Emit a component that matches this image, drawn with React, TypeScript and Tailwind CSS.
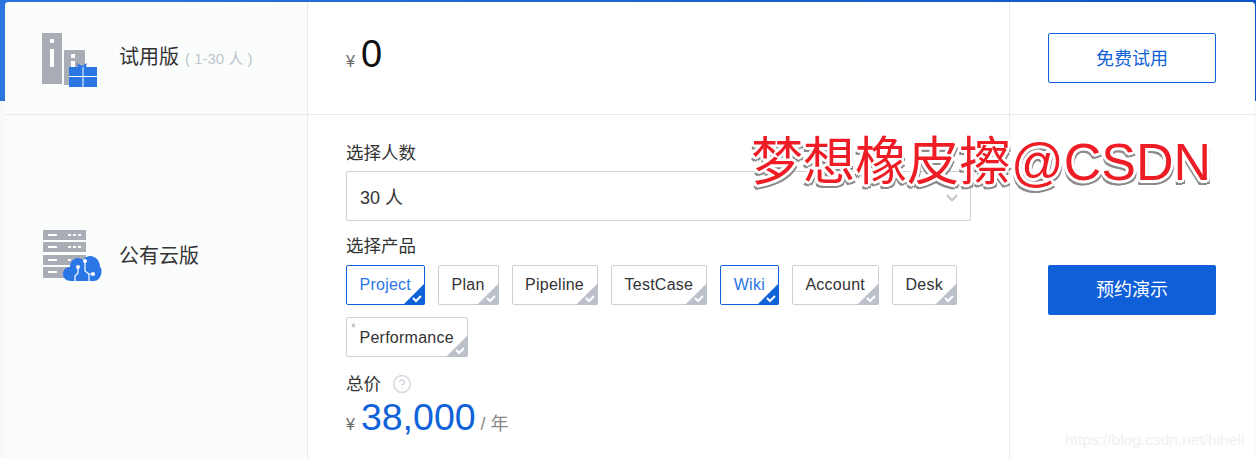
import React from "react";
import { ChevronDown, CircleHelp } from "lucide-react";

const PRODUCTS = [
  { name: "Project", active: true },
  { name: "Plan" },
  { name: "Pipeline" },
  { name: "TestCase" },
  { name: "Wiki", active: true },
  { name: "Account" },
  { name: "Desk" },
  { name: "Performance", star: true },
];

function TrialIcon() {
  return (
    <svg width="56" height="55" viewBox="0 0 56 55" className="shrink-0">
      <path fill="#a9adb6" d="M0 0h20v51H0z" />
      <path fill="#fff" d="M8 6h4v4H8zM8 16h4v18H8z" />
      <path fill="#a9adb6" d="M22 17h21v35H22z" />
      <path fill="#fff" d="M29 21h4v4h-4zM29 28h4v12h-4z" />
      <path fill="#2b76e5" d="M27 34h28v20H27z" />
      <path fill="#2b76e5" d="M35 30l5 3 5-3-1 4h-8z" />
      <path fill="#fff" d="M40.500 34h1v20h-1zM27 43h28v1H27z" />
    </svg>
  );
}

function CloudIcon() {
  return (
    <svg width="60" height="52" viewBox="0 0 60 52" className="shrink-0">
      <g fill="#a9adb6">
        <path d="M0 0h43v10H0zM0 12h43v10H0zM0 25h43v10H0zM0 37h43v11H0z" />
      </g>
      <g fill="#fff">
        <path d="M5 4h9v2H5zM25 4h3v2h-3zM30 4h3v2h-3zM35 4h3v2h-3z" />
        <path d="M5 16h9v2H5zM25 16h3v2h-3zM30 16h3v2h-3zM35 16h3v2h-3z" />
        <path d="M5 29h9v2H5zM25 29h3v2h-3zM30 29h3v2h-3z" />
        <path d="M5 41h9v2H5z" />
      </g>
      <path
        fill="#2b76e5"
        d="M28 51c-5 0-8-3-8-7 0-4 3-7 7-7 0-6 4-9 8-9 2 0 4 1 5 2 2-3 5-4 7-4 6 0 10 5 10 11 3 1 2 14-6 14z"
      />
      <g fill="none" stroke="#fff" strokeWidth="1.200">
        <path d="M35 38v5l-3 3v5M42 31v10l4 3v7M49 44h-3" />
      </g>
      <g fill="#fff">
        <circle cx="35" cy="37" r="2" />
        <circle cx="42" cy="31" r="2" />
        <circle cx="50" cy="44" r="2" />
      </g>
    </svg>
  );
}

function Chip({ name, active, star }: { name: string; active?: boolean; star?: boolean }) {
  return (
    <div
      className={`relative h-10 flex items-center pl-[12.500px] pr-[13px] rounded-[2px] border text-base tracking-[0.25px] ${
        active ? "border-[#0f62d8] text-[#2b76e5]" : "border-[#ccd0d8] text-[#333]"
      } ${star ? "pt-[1px]" : ""}`}
    >
      {star && <span className="absolute left-1 top-0.5 text-xs leading-4 text-[#a9adb6]">*</span>}
      {name}
      <svg width="22" height="22" viewBox="0 0 22 22" className="absolute -right-px -bottom-px">
        <path fill={active ? "#0f62d8" : "#bcc0c9"} d="M22 0v20a2 2 0 0 1-2 2H0z" />
        <path fill="none" stroke="#fff" strokeWidth="2" d="M10 15l3 3 5-5" />
      </svg>
    </div>
  );
}

export default function App() {
  return (
    <div className="relative w-[1256px] h-[458px] overflow-hidden bg-[#f8f8f8] text-[#333] font-['Liberation_Sans','Noto_Sans_CJK_SC',sans-serif]">
      {/* blue band behind the card */}
      <div className="absolute inset-x-0 top-0 h-[101px] bg-gradient-to-r from-[#2a75e0] to-[#0a55c5]" />

      <div className="relative ml-[5px] mr-px mt-[2px] bg-white rounded-t-[4px] overflow-hidden">
        {/* trial row */}
        <div className="flex h-[113px] border-b border-[#e8eaec]">
          <div className="w-[303px] shrink-0 flex items-start gap-[21px] pl-[37px] pt-[31px] bg-[#fbfdfd] border-r border-[#e8eaec]">
            <TrialIcon />
            <div className="pt-[10px] text-xl leading-7">
              试用版
              <span className="ml-1.5 text-[15px] text-[#c0c4cc]">( 1-30 人 )</span>
            </div>
          </div>
          <div className="flex-1 flex items-center pl-[38px] border-r border-[#e8eaec]">
            <div className="flex items-baseline -mt-[8px]">
              <span className="text-base text-[#666] mr-[6px]">¥</span>
              <span className="text-[38px] leading-[44px] text-[#111]">0</span>
            </div>
          </div>
          <div className="w-[245px] shrink-0 flex items-center pl-[38px] pb-[1px]">
            <button className="w-[168px] h-[50px] pt-[2px] rounded-[2px] border border-[#0f62d8] text-lg text-[#0f62d8]">
              免费试用
            </button>
          </div>
        </div>

        {/* cloud row */}
        <div className="flex h-[350px]">
          <div className="w-[303px] shrink-0 flex items-start gap-[16px] pl-[38px] pt-[115px] bg-[#fbfdfd] border-r border-[#e8eaec]">
            <CloudIcon />
            <div className="pt-[12px] text-xl leading-7">公有云版</div>
          </div>
          <div className="flex-1 flex flex-col pl-[38px] pr-[38px] pt-[25px] border-r border-[#e8eaec]">
            <div className="pt-px h-6 text-[17.500px] leading-6">选择人数</div>
            <div className="mt-[7px] h-[50px] flex items-center justify-between pl-[13px] pr-[9px] rounded-[2px] border border-[#ccd0d8] text-lg">
              <span className="pt-[3px]">30 人</span>
              <ChevronDown size={18} strokeWidth={3} className="mt-1 text-[#c0c4cc]" />
            </div>
            <div className="mt-[13px] h-6 text-[17.500px] leading-6">选择产品</div>
            <div className="mt-[7px] flex flex-wrap gap-x-[13px] gap-y-3">
              {PRODUCTS.map((p) => (
                <Chip key={p.name} {...p} />
              ))}
            </div>
            <div className="mt-[15px] flex items-center gap-[11px] text-[17.500px] leading-6">
              总价
              <CircleHelp size={20} className="text-[#d8dbe0]" />
            </div>
            <div className="flex items-baseline -mt-px">
              <span className="text-base text-[#666] mr-[6px]">¥</span>
              <span className="text-[37.500px] leading-[44px] text-[#0f62d8]">38,000</span>
              <span className="ml-[5px] text-lg text-[#888]">/ 年</span>
            </div>
          </div>
          <div className="w-[245px] shrink-0 flex items-center pl-[38px]">
            <button className="w-[168px] h-[50px] rounded-[2px] bg-[#0f5fd9] text-lg text-white">
              预约演示
            </button>
          </div>
        </div>
      </div>

      {/* pasted watermarks */}
      <div className="absolute left-[751px] top-[129px] text-[52px] leading-[66px] whitespace-nowrap text-[#ee1c25] [text-shadow:3px_0_0_#fff,-3px_0_0_#fff,0_3px_0_#fff,0_-3px_0_#fff,2px_2px_0_#fff,-2px_2px_0_#fff,2px_-2px_0_#fff,-2px_-2px_0_#fff,3px_4px_0_#8a8a8a,-2px_5px_0_#8a8a8a,0_5px_0_#8a8a8a]">
        梦想橡皮擦@CSDN
      </div>
      <div className="absolute left-[1065px] top-[431px] text-[15.500px] leading-[18px] text-[#f0f0f0]">
        https://blog.csdn.net/hihell
      </div>
    </div>
  );
}
